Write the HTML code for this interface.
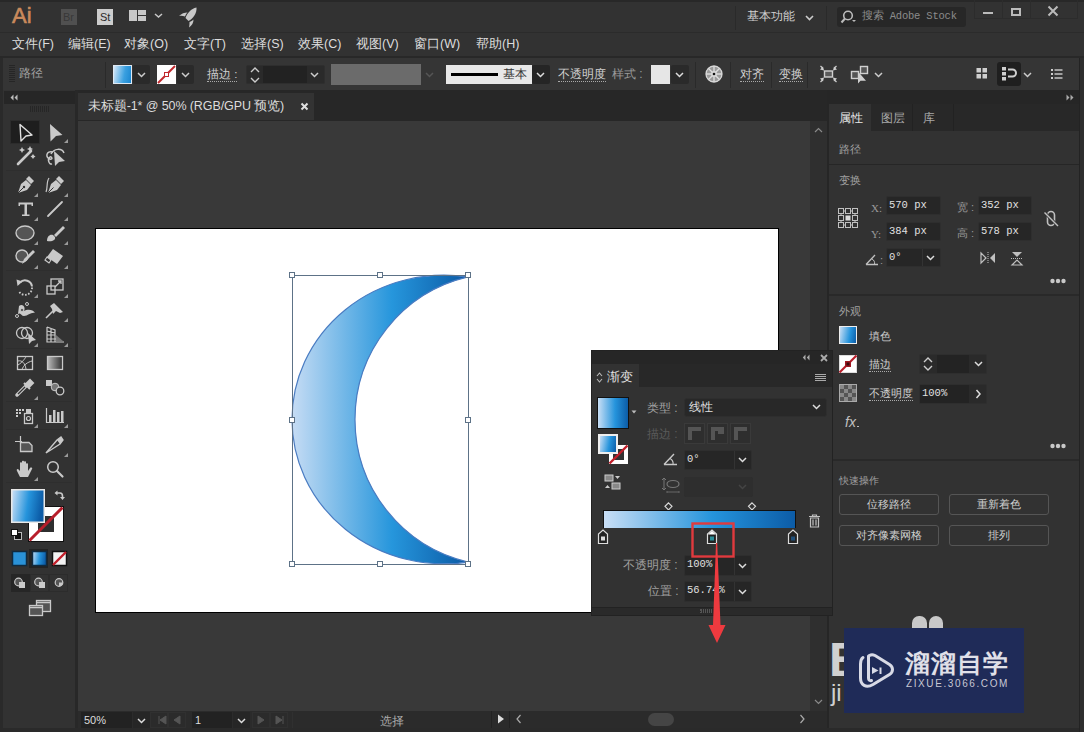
<!DOCTYPE html>
<html><head><meta charset="utf-8">
<style>
*{margin:0;padding:0;box-sizing:border-box}
html,body{width:1084px;height:732px;overflow:hidden;background:#323232;font-family:"Liberation Sans",sans-serif;color:#ccc}
.a{position:absolute}
.t{position:absolute;white-space:nowrap;font-size:12px;line-height:14px}
.m{font-family:"Liberation Mono",monospace}
svg{position:absolute;overflow:visible}
.sep{position:absolute;width:1px;background:#2a2a2a;border-right:1px solid #3a3a3a}
.inp{position:absolute;background:#262626;border:1px solid #2e2e2e;border-radius:2px}
.dd{position:absolute;background:#2a2a2a;border-radius:2px}
.ul{border-bottom:1px dotted #aaa}
</style></head><body>
<!-- ============ base blocks ============ -->
<div class="a" style="left:0;top:0;width:1084px;height:32px;background:#323232;border-top:2px solid #282828"></div>
<div class="a" style="left:0;top:32px;width:1084px;height:1px;background:#2b2b2b"></div>
<div class="a" style="left:0;top:56px;width:1084px;height:2px;background:#282828"></div>
<div class="a" style="left:0;top:58px;width:1084px;height:32px;background:#353535"></div>
<!-- left toolbar -->
<div class="a" style="left:0;top:90px;width:78px;height:642px;background:#323232"></div>
<div class="a" style="left:4px;top:91px;width:71px;height:13px;background:#262626"></div>
<div class="a" style="left:75px;top:90px;width:3px;height:642px;background:#282828"></div>
<div class="a" style="left:0;top:58px;width:3px;height:674px;background:#2a2a2a"></div>
<!-- doc tab bar -->
<div class="a" style="left:78px;top:90px;width:750px;height:31px;background:#272727"></div>
<div class="a" style="left:78px;top:93px;width:236px;height:27px;background:#333333"></div>
<!-- canvas -->
<div class="a" style="left:78px;top:121px;width:732px;height:590px;background:#393939"></div>
<div class="a" style="left:810px;top:121px;width:17px;height:590px;background:#2f2f2f"></div>
<div class="a" style="left:827px;top:90px;width:2px;height:642px;background:#262626"></div>
<!-- status bar -->
<div class="a" style="left:78px;top:711px;width:749px;height:17px;background:#2b2b2b"></div>
<div class="a" style="left:0;top:728px;width:1084px;height:4px;background:#2a2a2a"></div>
<!-- right panel -->
<div class="a" style="left:829px;top:90px;width:255px;height:14px;background:#262626"></div>
<div class="a" style="left:829px;top:104px;width:250px;height:624px;background:#323232"></div>
<div class="a" style="left:1079px;top:58px;width:5px;height:674px;background:#2e2e2e;border-left:1px solid #232323"></div>

<!-- artboard -->
<div class="a" style="left:95px;top:228px;width:684px;height:385px;background:#fff;border:1px solid #000"></div>


<!-- ============ moon ============ -->
<svg style="left:0;top:0" width="1084" height="732">
<defs><linearGradient id="mg" gradientUnits="userSpaceOnUse" x1="292" y1="0" x2="468" y2="0">
<stop offset="0" stop-color="#c6dcf4"/><stop offset="0.5674" stop-color="#2696dc"/><stop offset="1" stop-color="#0b5aa5"/></linearGradient></defs>
<path d="M468 276.95 A152.01 144.36 0 1 0 468 562.05 A146.41 146.41 0 0 1 468 276.95 Z" fill="url(#mg)" stroke="#4a7cc2" stroke-width="1.2"/>
<rect x="292.5" y="275.5" width="176" height="289" fill="none" stroke="#5d7287" stroke-width="1"/>
<g fill="#fff" stroke="#5d7287" stroke-width="1">
<rect x="289.5" y="272.5" width="5" height="5"/><rect x="377.5" y="272.5" width="5" height="5"/><rect x="465.5" y="272.5" width="5" height="5"/>
<rect x="289.5" y="417.5" width="5" height="5"/><rect x="465.5" y="417.5" width="5" height="5"/>
<rect x="289.5" y="561.5" width="5" height="5"/><rect x="377.5" y="561.5" width="5" height="5"/><rect x="465.5" y="561.5" width="5" height="5"/>
</g></svg>

<!-- ============ title bar ============ -->
<div class="t" style="left:12px;top:4px;font-size:22px;line-height:24px;color:#cc8a58;font-weight:normal;-webkit-text-stroke:0.6px #c98a5c;color:#c98a5c">Ai</div>
<div class="a" style="left:61px;top:9px;width:16px;height:16px;background:#505050"></div>
<div class="t" style="left:63px;top:10px;font-size:11px;color:#383838">Br</div>
<div class="a" style="left:97px;top:9px;width:16px;height:16px;background:#cdcdcd"></div>
<div class="t" style="left:100px;top:10px;font-size:11px;color:#2a2a2a">St</div>
<svg style="left:128px;top:10px" width="40" height="14"><rect x="1" y="0" width="8" height="11" fill="#c8c8c8"/><rect x="10" y="0" width="8" height="5" fill="#c8c8c8"/><rect x="10" y="6" width="8" height="5" fill="#c8c8c8"/><path d="M27 4 L30.5 7 L34 4" stroke="#c8c8c8" stroke-width="1.5" fill="none"/></svg>
<svg style="left:176px;top:5px" width="24" height="24"><path d="M20.5 2.5 C21 8 17 14 12.5 16 L9.5 13 C11 8.5 15 3.5 20.5 2.5 Z" fill="#c8c8c8"/><path d="M9 11.5 C9.5 10 10.5 8.5 11.5 7.5 C8.5 7.5 5.5 8.5 3 11 C5 10.5 7 10.8 9 11.5 Z" fill="#c8c8c8"/><path d="M13.5 17 C15 16.5 16.5 15.5 17.5 14.5 C17.5 17.5 16 20.5 13 22.5 C13.5 20.5 13.5 18.8 13.5 17 Z" fill="#c8c8c8"/></svg>
<div class="a" style="left:735px;top:6px;width:1px;height:24px;background:#2a2a2a"></div>
<div class="t" style="left:747px;top:9px;font-size:12px;color:#d0d0d0">基本功能</div>
<svg style="left:805px;top:14px" width="10" height="8"><path d="M1 2 L4.5 5.5 L8 2" stroke="#ccc" stroke-width="1.6" fill="none"/></svg>
<div class="a" style="left:826px;top:6px;width:1px;height:24px;background:#2a2a2a"></div>
<div class="a" style="left:837px;top:7px;width:129px;height:20px;background:#272727;border-radius:3px"></div>
<svg style="left:840px;top:9px" width="18" height="16"><circle cx="8" cy="6.5" r="4.3" stroke="#bbb" stroke-width="1.6" fill="none"/><path d="M5 9.5 L1.5 13.5" stroke="#bbb" stroke-width="2"/><path d="M12 11 L16 11 L14 13 Z" fill="#bbb"/></svg>
<div class="t m" style="left:862px;top:9px;font-size:10.5px;color:#8c8c8c;letter-spacing:-0.2px">搜索 Adobe Stock</div>
<div class="a" style="left:974px;top:0;width:104px;height:19px;border:1px solid #2c2c2c;border-top:none"></div>
<div class="a" style="left:1002px;top:0;width:1px;height:19px;background:#2c2c2c"></div>
<div class="a" style="left:1030px;top:0;width:1px;height:19px;background:#2c2c2c"></div>
<div class="a" style="left:983px;top:12px;width:10px;height:2px;background:#bbb"></div>
<div class="a" style="left:1011px;top:8px;width:10px;height:8px;border:2px solid #bbb;border-top-width:2px"></div>
<svg style="left:1047px;top:5px" width="12" height="12"><path d="M1.5 1.5 L10.5 10.5 M10.5 1.5 L1.5 10.5" stroke="#bbb" stroke-width="2"/></svg>

<!-- ============ menu ============ -->
<div class="t" style="left:12px;top:37px;font-size:12.5px;color:#ddd">文件(F)</div>
<div class="t" style="left:68px;top:37px;font-size:12.5px;color:#ddd">编辑(E)</div>
<div class="t" style="left:124px;top:37px;font-size:12.5px;color:#ddd">对象(O)</div>
<div class="t" style="left:184px;top:37px;font-size:12.5px;color:#ddd">文字(T)</div>
<div class="t" style="left:241px;top:37px;font-size:12.5px;color:#ddd">选择(S)</div>
<div class="t" style="left:298px;top:37px;font-size:12.5px;color:#ddd">效果(C)</div>
<div class="t" style="left:356px;top:37px;font-size:12.5px;color:#ddd">视图(V)</div>
<div class="t" style="left:414px;top:37px;font-size:12.5px;color:#ddd">窗口(W)</div>
<div class="t" style="left:476px;top:37px;font-size:12.5px;color:#ddd">帮助(H)</div>

<!-- ============ control bar ============ -->
<div class="a" style="left:9px;top:65px;width:6px;height:18px;background:repeating-linear-gradient(180deg,#262626 0 1px,transparent 1px 2px)"></div>
<div class="t" style="left:19px;top:66px;font-size:12px;color:#a0a0a0">路径</div>
<div class="a" style="left:105px;top:62px;width:1px;height:26px;background:#2a2a2a"></div>
<div class="a" style="left:113px;top:65px;width:19px;height:19px;border:1px solid #dfe9f3;background:linear-gradient(100deg,#d4e7f8 0%,#3aa0e0 60%,#1a86d0 100%)"></div>
<div class="dd" style="left:133px;top:65px;width:17px;height:19px"></div>
<svg style="left:137px;top:72px" width="10" height="6"><path d="M1 1 L4.5 4.5 L8 1" stroke="#ccc" stroke-width="1.5" fill="none"/></svg>
<div class="a" style="left:157px;top:65px;width:19px;height:19px;background:#fff"></div>
<svg style="left:157px;top:65px" width="19" height="19"><path d="M1 18 L18 1" stroke="#c0282d" stroke-width="2"/><rect x="7" y="7" width="5" height="5" fill="#c0282d"/><rect x="8" y="8" width="3" height="3" fill="#fff"/></svg>
<div class="dd" style="left:177px;top:65px;width:17px;height:19px"></div>
<svg style="left:181px;top:72px" width="10" height="6"><path d="M1 1 L4.5 4.5 L8 1" stroke="#ccc" stroke-width="1.5" fill="none"/></svg>
<div class="t ul" style="left:207px;top:68px;font-size:11.5px;color:#d0d0d0;line-height:13px">描边 :</div>
<div class="inp" style="left:246px;top:65px;width:79px;height:19px;background:#2a2a2a"></div>
<svg style="left:249px;top:66px" width="12" height="18"><path d="M2 6 L6 2 L10 6 M2 12 L6 16 L10 12" stroke="#ccc" stroke-width="1.4" fill="none"/></svg>
<div class="a" style="left:263px;top:66px;width:44px;height:17px;background:#222"></div>
<svg style="left:310px;top:72px" width="10" height="6"><path d="M1 1 L4.5 4.5 L8 1" stroke="#ccc" stroke-width="1.5" fill="none"/></svg>
<div class="a" style="left:331px;top:64px;width:90px;height:21px;background:#6b6b6b"></div>
<svg style="left:425px;top:72px" width="10" height="6"><path d="M1 1 L4.5 4.5 L8 1" stroke="#555" stroke-width="1.5" fill="none"/></svg>
<div class="a" style="left:446px;top:65px;width:86px;height:19px;background:#e8e8e8"></div>
<div class="a" style="left:451px;top:73px;width:47px;height:3px;background:#000"></div>
<div class="t" style="left:503px;top:67px;font-size:12px;color:#333">基本</div>
<div class="dd" style="left:532px;top:65px;width:18px;height:19px;background:#252525"></div>
<svg style="left:536px;top:72px" width="10" height="6"><path d="M1 1 L4.5 4.5 L8 1" stroke="#ddd" stroke-width="1.5" fill="none"/></svg>
<div class="t ul" style="left:558px;top:68px;font-size:11.5px;color:#d0d0d0;line-height:13px">不透明度</div>
<div class="t" style="left:612px;top:67px;font-size:12px;color:#9a9a9a">样式 :</div>
<div class="a" style="left:651px;top:65px;width:19px;height:19px;background:#e6e6e6"></div>
<div class="dd" style="left:671px;top:65px;width:18px;height:19px"></div>
<svg style="left:675px;top:72px" width="10" height="6"><path d="M1 1 L4.5 4.5 L8 1" stroke="#ddd" stroke-width="1.5" fill="none"/></svg>
<div class="a" style="left:695px;top:62px;width:1px;height:26px;background:#2a2a2a"></div>
<svg style="left:705px;top:65px" width="18" height="18"><circle cx="9" cy="9" r="8" fill="#9a9a9a" stroke="#d8d8d8" stroke-width="1.3"/><g stroke="#dcdcdc" stroke-width="1.4"><path d="M9 1 V17 M1 9 H17 M3.3 3.3 L14.7 14.7 M14.7 3.3 L3.3 14.7"/></g><circle cx="9" cy="9" r="3" fill="#d8d8d8"/><circle cx="9" cy="9" r="1.3" fill="#111"/></svg>
<div class="a" style="left:730px;top:62px;width:1px;height:26px;background:#2a2a2a"></div>
<div class="t ul" style="left:740px;top:68px;font-size:11.5px;color:#d0d0d0;line-height:13px">对齐</div>
<div class="a" style="left:771px;top:62px;width:1px;height:26px;background:#2a2a2a"></div>
<div class="t ul" style="left:779px;top:68px;font-size:11.5px;color:#d0d0d0;line-height:13px">变换</div>
<div class="a" style="left:807px;top:62px;width:1px;height:26px;background:#2a2a2a"></div>
<svg style="left:819px;top:65px" width="19" height="17"><rect x="5.5" y="6" width="8" height="6" stroke="#d0d0d0" stroke-width="1.4" fill="#5a5a5a"/><g fill="#d0d0d0"><path d="M5 5.5 L1 4.5 L4 1.5 Z M14 5.5 L18 4.5 L15 1.5 Z M5 12.5 L1 13.5 L4 16.5 Z M14 12.5 L18 13.5 L15 16.5 Z"/></g><g stroke="#d0d0d0" stroke-width="1.2"><path d="M1.5 1 L3.5 3 M17.5 1 L15.5 3 M1.5 17 L3.5 15 M17.5 17 L15.5 15"/></g></svg>
<svg style="left:850px;top:65px" width="19" height="20"><rect x="1.5" y="6.5" width="7" height="7" stroke="#d0d0d0" stroke-width="1.4" fill="#555"/><rect x="10.5" y="1.5" width="7" height="7" stroke="#d0d0d0" stroke-width="1.4" fill="#555"/><path d="M8 6.5 L8 18.5 L10.5 15.8 L16 15.8 Z" fill="#d0d0d0"/></svg>
<svg style="left:874px;top:72px" width="10" height="6"><path d="M1 1 L4.5 4.5 L8 1" stroke="#ccc" stroke-width="1.5" fill="none"/></svg>
<svg style="left:974px;top:66px" width="16" height="15"><g fill="#cfcfcf"><rect x="2.5" y="2" width="4.5" height="4.5"/><rect x="8.5" y="2" width="4.5" height="4.5"/><rect x="2.5" y="8" width="4.5" height="4.5"/><rect x="8.5" y="8" width="4.5" height="4.5"/></g></svg>
<div class="a" style="left:997px;top:62px;width:24px;height:24px;background:#1f1f1f;border-radius:3px"></div>
<svg style="left:1001px;top:67px" width="17" height="14"><g fill="#cfcfcf"><rect x="1" y="0" width="4" height="3.5"/><rect x="1" y="5" width="4" height="3.5"/><rect x="1" y="10" width="4" height="3.5"/></g><path d="M7 2.5 H11.5 A3.5 3.5 0 0 1 11.5 9.5 H7" stroke="#cfcfcf" stroke-width="2" fill="none"/></svg>
<svg style="left:1023px;top:72px" width="10" height="6"><path d="M1 1 L4.5 4.5 L8 1" stroke="#ccc" stroke-width="1.5" fill="none"/></svg>
<svg style="left:1050px;top:68px" width="14" height="11"><g fill="#cfcfcf"><rect x="1" y="1" width="2" height="2"/><rect x="1" y="5" width="2" height="2"/><rect x="1" y="9" width="2" height="2"/><rect x="4.5" y="1.3" width="8" height="1.4"/><rect x="4.5" y="5.3" width="8" height="1.4"/><rect x="4.5" y="9.3" width="8" height="1.4"/></g></svg>



<!-- ============ scrollbars & status ============ -->
<svg style="left:814px;top:127px" width="9" height="6"><path d="M1 5 L4.5 1.5 L8 5" stroke="#8a8a8a" stroke-width="1.2" fill="none"/></svg>
<svg style="left:814px;top:699px" width="9" height="6"><path d="M1 1 L4.5 4.5 L8 1" stroke="#8a8a8a" stroke-width="1.2" fill="none"/></svg>
<div class="a" style="left:510px;top:711px;width:300px;height:17px;background:#2b2b2b"></div>
<div class="a" style="left:648px;top:713px;width:26px;height:13px;background:#454545;border-radius:7px"></div>
<svg style="left:515px;top:714px" width="8" height="10"><path d="M5.5 1 L2 5 L5.5 9" stroke="#aaa" stroke-width="1.2" fill="none"/></svg>
<svg style="left:798px;top:714px" width="8" height="10"><path d="M2.5 1 L6 5 L2.5 9" stroke="#aaa" stroke-width="1.2" fill="none"/></svg>
<div class="a" style="left:81px;top:712px;width:51px;height:16px;background:#222"></div>
<div class="t" style="left:84px;top:713px;font-size:11px;color:#ddd">50%</div>
<div class="a" style="left:133px;top:712px;width:17px;height:16px;background:#262626"></div>
<svg style="left:137px;top:718px" width="10" height="6"><path d="M1 1 L4.5 4.5 L8 1" stroke="#ddd" stroke-width="1.5" fill="none"/></svg>
<svg style="left:150px;top:712px" width="40" height="16"><rect x="0.5" y="0.5" width="17" height="15" fill="none" stroke="#303030"/><rect x="18.5" y="0.5" width="17" height="15" fill="none" stroke="#303030"/><path d="M9 4 V12 M16 4 L10 8 L16 12 Z M30 4 L24 8 L30 12 Z" fill="#555" stroke="#555"/></svg>
<div class="a" style="left:192px;top:712px;width:40px;height:16px;background:#222"></div>
<div class="t" style="left:195px;top:713px;font-size:11px;color:#ddd">1</div>
<div class="a" style="left:233px;top:712px;width:17px;height:16px;background:#262626"></div>
<svg style="left:237px;top:718px" width="10" height="6"><path d="M1 1 L4.5 4.5 L8 1" stroke="#ddd" stroke-width="1.5" fill="none"/></svg>
<svg style="left:252px;top:712px" width="40" height="16"><rect x="0.5" y="0.5" width="17" height="15" fill="none" stroke="#303030"/><rect x="18.5" y="0.5" width="17" height="15" fill="none" stroke="#303030"/><path d="M6 4 L12 8 L6 12 Z M24 4 L30 8 L24 12 Z M31 4 V12" fill="#555" stroke="#555"/></svg>
<div class="a" style="left:292px;top:712px;width:1px;height:16px;background:#303030"></div>
<div class="t" style="left:380px;top:714px;font-size:12px;color:#aaa">选择</div>
<div class="a" style="left:491px;top:711px;width:1px;height:17px;background:#222"></div>
<svg style="left:497px;top:714px" width="8" height="10"><path d="M1 0.5 L7 5 L1 9.5 Z" fill="#ddd"/></svg>
<div class="a" style="left:509px;top:711px;width:1px;height:17px;background:#222"></div>


<!-- ============ right panel ============ -->
<div class="a" style="left:829px;top:104px;width:250px;height:27px;background:#282828"></div>
<div class="a" style="left:829px;top:104px;width:42px;height:27px;background:#323232"></div>
<div class="a" style="left:912px;top:104px;width:1px;height:27px;background:#222"></div>
<div class="a" style="left:953px;top:104px;width:1px;height:27px;background:#222"></div>
<div class="t" style="left:839px;top:111px;font-size:12px;color:#e8e8e8">属性</div>
<div class="t" style="left:881px;top:111px;font-size:12px;color:#a8a8a8">图层</div>
<div class="t" style="left:923px;top:111px;font-size:12px;color:#a8a8a8">库</div>
<div class="t" style="left:839px;top:142px;font-size:11px;color:#a0a0a0">路径</div>
<div class="a" style="left:829px;top:164px;width:250px;height:1px;background:#262626"></div>
<div class="t" style="left:839px;top:173px;font-size:11px;color:#a0a0a0">变换</div>
<svg style="left:838px;top:208px" width="22" height="22"><g fill="none" stroke="#c0c0c0" stroke-width="1"><rect x="0.5" y="0.5" width="5" height="5"/><rect x="7.5" y="0.5" width="5" height="5"/><rect x="14.5" y="0.5" width="5" height="5"/><rect x="0.5" y="7.5" width="5" height="5"/><rect x="14.5" y="7.5" width="5" height="5"/><rect x="0.5" y="14.5" width="5" height="5"/><rect x="7.5" y="14.5" width="5" height="5"/><rect x="14.5" y="14.5" width="5" height="5"/><path d="M5.5 3 H7.5 M12.5 3 H14.5 M5.5 17 H7.5 M12.5 17 H14.5 M3 5.5 V7.5 M3 12.5 V14.5 M17 5.5 V7.5 M17 12.5 V14.5"/></g><rect x="7.5" y="7.5" width="5" height="5" fill="#ddd"/></svg>
<div class="t" style="left:871px;top:201px;font-size:11px;color:#999;font-family:'Liberation Serif',serif">X:</div>
<div class="t" style="left:871px;top:227px;font-size:11px;color:#999;font-family:'Liberation Serif',serif">Y:</div>
<div class="inp" style="left:886px;top:196px;width:55px;height:19px"></div>
<div class="inp" style="left:886px;top:222px;width:55px;height:19px"></div>
<div class="t m" style="left:889px;top:198px;font-size:10.5px;color:#e0e0e0">570 px</div>
<div class="t m" style="left:889px;top:224px;font-size:10.5px;color:#e0e0e0">384 px</div>
<div class="t" style="left:957px;top:200px;font-size:11px;color:#999">宽 :</div>
<div class="t" style="left:957px;top:226px;font-size:11px;color:#999">高 :</div>
<div class="inp" style="left:978px;top:196px;width:54px;height:19px"></div>
<div class="inp" style="left:978px;top:222px;width:54px;height:19px"></div>
<div class="t m" style="left:981px;top:198px;font-size:10.5px;color:#e0e0e0">352 px</div>
<div class="t m" style="left:981px;top:224px;font-size:10.5px;color:#e0e0e0">578 px</div>
<svg style="left:1043px;top:210px" width="18" height="18"><rect x="4.5" y="1.5" width="7" height="14" rx="3.5" fill="none" stroke="#c0c0c0" stroke-width="1.6"/><path d="M1 2 L15 16" stroke="#323232" stroke-width="3"/><path d="M1.5 2.5 L15 16" stroke="#c0c0c0" stroke-width="1.4"/></svg>
<svg style="left:865px;top:252px" width="16" height="14"><path d="M1 12.5 H13 M1 12.5 L10 3" stroke="#c0c0c0" stroke-width="1.3" fill="none"/><path d="M7 7 C9 8 10 10 9.5 12.5" stroke="#c0c0c0" stroke-width="1" fill="none"/></svg>
<div class="t" style="left:880px;top:253px;font-size:11px;color:#999">:</div>
<div class="inp" style="left:886px;top:248px;width:55px;height:19px"></div>
<div class="a" style="left:922px;top:249px;width:1px;height:17px;background:#333"></div>
<div class="t m" style="left:889px;top:250px;font-size:10.5px;color:#e0e0e0">0°</div>
<svg style="left:926px;top:255px" width="10" height="6"><path d="M1 1 L4.5 4.5 L8 1" stroke="#ddd" stroke-width="1.5" fill="none"/></svg>
<svg style="left:980px;top:251px" width="16" height="14"><path d="M1 2 L6 7 L1 12 Z" fill="none" stroke="#c0c0c0" stroke-width="1.2"/><path d="M15 2 L10 7 L15 12 Z" fill="#c0c0c0"/><path d="M8 1 V13" stroke="#c0c0c0" stroke-dasharray="1 1"/></svg>
<svg style="left:1010px;top:251px" width="14" height="15"><path d="M2 1 H12 L7 6 Z" fill="#c0c0c0"/><path d="M2 14 H12 L7 9 Z" fill="none" stroke="#c0c0c0" stroke-width="1.2"/><path d="M1 7.5 H13" stroke="#c0c0c0" stroke-dasharray="1 1"/></svg>
<svg style="left:1050px;top:278px" width="16" height="6"><circle cx="2.5" cy="3" r="2.2" fill="#c8c8c8"/><circle cx="8" cy="3" r="2.2" fill="#c8c8c8"/><circle cx="13.5" cy="3" r="2.2" fill="#c8c8c8"/></svg>
<div class="a" style="left:829px;top:294px;width:250px;height:2px;background:#292929"></div>
<div class="t" style="left:839px;top:304px;font-size:11px;color:#a0a0a0">外观</div>
<div class="a" style="left:839px;top:326px;width:18px;height:18px;background:#eee"></div>
<div class="a" style="left:840px;top:327px;width:16px;height:16px;background:linear-gradient(100deg,#c8def5 0%,#2594dc 60%,#0c5ca7 100%)"></div>
<div class="t" style="left:869px;top:329px;font-size:11px;color:#c8c8c8">填色</div>
<div class="a" style="left:839px;top:355px;width:18px;height:18px;background:#fff"></div>
<svg style="left:839px;top:355px" width="18" height="18"><rect x="0.5" y="0.5" width="17" height="17" fill="none" stroke="#ddd"/><path d="M0.5 17.5 L17.5 0.5" stroke="#b81e2b" stroke-width="2.2"/><rect x="6" y="6" width="6" height="6" fill="#a01822"/><rect x="7.5" y="7.5" width="3" height="3" fill="#3a0a0e"/></svg>
<div class="t ul" style="left:869px;top:358px;font-size:11px;color:#d0d0d0;line-height:13px">描边</div>
<div class="inp" style="left:919px;top:354px;width:68px;height:20px;background:#2a2a2a"></div>
<svg style="left:921px;top:355px" width="14" height="18"><path d="M3 7 L7 3 L11 7 M3 11 L7 15 L11 11" stroke="#ccc" stroke-width="1.4" fill="none"/></svg>
<div class="a" style="left:937px;top:355px;width:32px;height:18px;background:#232323"></div>
<svg style="left:974px;top:361px" width="10" height="6"><path d="M1 1 L4.5 4.5 L8 1" stroke="#ddd" stroke-width="1.5" fill="none"/></svg>
<svg style="left:839px;top:384px" width="18" height="18"><rect x="0.5" y="0.5" width="17" height="17" fill="#555" stroke="#aaa"/><g fill="#888"><rect x="1" y="1" width="4" height="4"/><rect x="9" y="1" width="4" height="4"/><rect x="5" y="5" width="4" height="4"/><rect x="13" y="5" width="4" height="4"/><rect x="1" y="9" width="4" height="4"/><rect x="9" y="9" width="4" height="4"/><rect x="5" y="13" width="4" height="4"/><rect x="13" y="13" width="4" height="4"/></g></svg>
<div class="t ul" style="left:869px;top:387px;font-size:11px;color:#d0d0d0;line-height:13px">不透明度</div>
<div class="inp" style="left:919px;top:384px;width:68px;height:20px;background:#2a2a2a"></div>
<div class="a" style="left:920px;top:385px;width:49px;height:18px;background:#232323"></div>
<div class="t m" style="left:922px;top:386px;font-size:10.5px;color:#e0e0e0">100%</div>
<svg style="left:975px;top:389px" width="7" height="10"><path d="M1.5 1 L5 5 L1.5 9" stroke="#ddd" stroke-width="1.5" fill="none"/></svg>
<div class="t" style="left:845px;top:415px;font-size:14px;color:#c0c0c0;font-style:italic;font-family:'Liberation Sans',sans-serif">fx</div>
<div class="a" style="left:857px;top:426px;width:2px;height:1px;background:#bbb"></div>
<svg style="left:1050px;top:443px" width="16" height="6"><circle cx="2.5" cy="3" r="2.2" fill="#c8c8c8"/><circle cx="8" cy="3" r="2.2" fill="#c8c8c8"/><circle cx="13.5" cy="3" r="2.2" fill="#c8c8c8"/></svg>
<div class="a" style="left:829px;top:459px;width:250px;height:2px;background:#292929"></div>
<div class="t" style="left:839px;top:474px;font-size:10.2px;color:#a0a0a0">快速操作</div>
<div class="a" style="left:839px;top:494px;width:100px;height:21px;border:1px solid #555;border-radius:3px;text-align:center;font-size:11px;line-height:19px;color:#d0d0d0">位移路径</div>
<div class="a" style="left:949px;top:494px;width:100px;height:21px;border:1px solid #555;border-radius:3px;text-align:center;font-size:11px;line-height:19px;color:#d0d0d0">重新着色</div>
<div class="a" style="left:839px;top:525px;width:100px;height:21px;border:1px solid #555;border-radius:3px;text-align:center;font-size:11px;line-height:19px;color:#d0d0d0">对齐像素网格</div>
<div class="a" style="left:949px;top:525px;width:100px;height:21px;border:1px solid #555;border-radius:3px;text-align:center;font-size:11px;line-height:19px;color:#d0d0d0">排列</div>

<!-- ============ left toolbar ============ -->
<svg style="left:0;top:0" width="80" height="732">
<path d="M30 106 H50 V112 H30 Z" fill="url(#grip)"/><defs><pattern id="grip" width="2" height="6" patternUnits="userSpaceOnUse" x="30" y="106"><rect width="1" height="6" fill="#262626"/></pattern></defs>
<rect x="10.5" y="120.5" width="29" height="23" fill="#1e1e1e" stroke="#2c2c2c"/>
<g fill="#2e2e2e"><rect x="6" y="170" width="66" height="1"/><rect x="6" y="270" width="66" height="1"/><rect x="6" y="348" width="66" height="1"/><rect x="6" y="401" width="66" height="1"/><rect x="6" y="429" width="66" height="1"/><rect x="6" y="482" width="66" height="1"/></g>
<g fill="#c9c9c9" stroke="none">
<!-- corner triangles -->
<path d="M68 139 V143 H64 Z M38 193 V197 H34 Z M68 193 V197 H64 Z M38 217 V221 H34 Z M68 217 V221 H64 Z M38 241 V245 H34 Z M68 241 V245 H64 Z M38 265 V269 H34 Z M68 265 V269 H64 Z M38 294 V298 H34 Z M68 294 V298 H64 Z M38 318 V322 H34 Z M68 318 V322 H64 Z M38 343 V347 H34 Z M68 343 V347 H64 Z M38 396 V400 H34 Z M38 424 V428 H34 Z M68 424 V428 H64 Z M68 453 V457 H64 Z M38 477 V481 H34 Z" fill="#9a9a9a"/>
</g>
<!-- selection -->
<path d="M20 124.5 L32 135 L26 136 L21 141 Z" fill="none" stroke="#e0e0e0" stroke-width="1.4" stroke-linejoin="round"/>
<path d="M50 124 L62.5 135 L56 136 L50.5 141.5 Z" fill="#c9c9c9"/>
<!-- magic wand -->
<path d="M18 164 L31 151" stroke="#c9c9c9" stroke-width="2.6" stroke-linecap="round"/>
<path d="M22 147 l1 2 2 1 -2 1 -1 2 -1 -2 -2 -1 2 -1 Z M30 146 l1 2 2 1 -2 1 -1 2 -1 -2 -2 -1 2 -1 Z M33 154 l1 1.5 1.5 1 -1.5 1 -1 1.5 -1 -1.5 -1.5 -1 1.5 -1 Z" fill="#c9c9c9"/>
<!-- lasso -->
<path d="M53 152 C46 150 45 158 50 159 C53 160 52 156 50 157 C47 159 49 165 52 164" stroke="#c9c9c9" stroke-width="1.5" fill="none"/>
<path d="M51 154 C54 148 62 148 64 153" stroke="#c9c9c9" stroke-width="1.5" fill="none"/>
<path d="M54 151 L65 161 L59 162 L55 166 Z" fill="#c9c9c9"/>
<!-- pen -->
<path d="M18 193 L21 184 L26 180 L31 185 L27 190 Z" fill="#c9c9c9"/><path d="M26 179 L29 176 L34 181 L31 184 Z" fill="#c9c9c9"/><path d="M18 193 L23.5 187.5" stroke="#323232" stroke-width="1"/><circle cx="24" cy="187" r="1.2" fill="#323232"/>
<!-- curvature pen -->
<path d="M48 193 L51 184 L56 180 L61 185 L57 190 Z" fill="#c9c9c9"/><path d="M56 179 L59 176 L64 181 L61 184 Z" fill="#c9c9c9"/><path d="M48 193 L53.5 187.5" stroke="#323232" stroke-width="1"/>
<path d="M49 178 C46 182 48 188 46 192" stroke="#c9c9c9" stroke-width="1.2" fill="none"/>
<!-- type -->
<path d="M18.5 202.5 H33 V206 H31.5 V204.5 H27 V214.5 H29.5 V216 H22 V214.5 H24.5 V204.5 H20 V206 H18.5 Z" fill="#c9c9c9"/>
<!-- line -->
<path d="M48 216 L62 202" stroke="#c9c9c9" stroke-width="1.8" stroke-linecap="round"/>
<!-- ellipse -->
<ellipse cx="25" cy="233" rx="9" ry="7" fill="#555" stroke="#c9c9c9" stroke-width="1.4"/>
<!-- brush -->
<path d="M47 241 C47 236 50 234 53 235 L55 237 C56 240 52 242 47 241 Z" fill="#c9c9c9"/><path d="M54 235 L63 226 L65 228 L56 237 Z" fill="#c9c9c9"/>
<!-- shaper/blob -->
<circle cx="22" cy="256" r="6" fill="#555" stroke="#c9c9c9" stroke-width="1.4"/>
<path d="M22 264 L24 259 L33 250 L35 252 L26 261 Z" fill="#c9c9c9"/>
<!-- eraser -->
<path d="M53 249 L63 256 L57 264 L47 257 Z" fill="#c9c9c9"/><path d="M47 257 L51 260 L49 263 L45 260 Z" fill="#323232" stroke="#c9c9c9" stroke-width="1.2"/>
<!-- rotate -->
<path d="M20 282.5 A7 7 0 0 1 32 286.5" stroke="#c9c9c9" stroke-width="2" fill="none"/><path d="M32 287.5 A7 7 0 0 1 19 291.5" stroke="#c9c9c9" stroke-width="1.8" fill="none" stroke-dasharray="1.6 1.6"/><path d="M16.5 279.5 L22.5 281.5 L17.5 286 Z" fill="#c9c9c9"/>
<!-- scale -->
<rect x="47" y="286" width="8" height="8" stroke="#c9c9c9" stroke-width="1.3" fill="none"/><rect x="51" y="279" width="12" height="11" stroke="#c9c9c9" stroke-width="1.3" fill="none"/><path d="M55 287 L61 281 M58 281 H61 V284" stroke="#c9c9c9" stroke-width="1.3" fill="none"/>
<!-- puppet warp -->
<path d="M19 306 C23 303 26 308 24 311 C27 309 33 309 35 313 C31 312 28 316 24 316 C21 316 21 312 18 314 Z" fill="#c9c9c9"/><circle cx="17" cy="316" r="1.5" fill="#323232" stroke="#c9c9c9"/><circle cx="27" cy="304" r="1.5" fill="#323232" stroke="#c9c9c9"/><circle cx="22" cy="310" r="1.5" fill="#323232" stroke="#c9c9c9"/>
<!-- pin -->
<path d="M54 303 L63 312 L60 313 L56 311 L53 314 L52 309 L50 306 Z" fill="#c9c9c9"/><path d="M46 318 L53 311" stroke="#c9c9c9" stroke-width="1.6"/>
<!-- shape builder -->
<circle cx="22" cy="333" r="5.5" stroke="#c9c9c9" stroke-width="1.3" fill="none"/><circle cx="27" cy="333" r="5.5" stroke="#c9c9c9" stroke-width="1.3" fill="none"/><path d="M28 333 L36 340 L32 341 L29 344 Z" fill="#c9c9c9"/>
<!-- perspective grid -->
<path d="M47 327 L55 330 V342 H64 M47 327 V342 H64 M47 331 L55 333 M47 335 H55 M47 339 H58 M51 328 V342" stroke="#c9c9c9" stroke-width="1.2" fill="none"/><path d="M56 335 L63 341 H56 Z" fill="#777"/>
<!-- mesh -->
<rect x="17.5" y="356.5" width="15" height="13" stroke="#c9c9c9" stroke-width="1.3" fill="none"/><path d="M18 365 C23 362 25 358 26 357 M22 370 C23 365 28 362 32 361 M18 361 C22 360 25 363 26 369" stroke="#c9c9c9" stroke-width="1" fill="none"/>
<!-- gradient tool -->
<defs><linearGradient id="gt" x1="0" x2="1"><stop offset="0" stop-color="#bdbdbd"/><stop offset="1" stop-color="#2e2e2e"/></linearGradient></defs>
<rect x="47.5" y="356.5" width="15" height="13" fill="url(#gt)" stroke="#c9c9c9" stroke-width="1.3"/>
<!-- eyedropper -->
<path d="M17 395 L26 386" stroke="#c9c9c9" stroke-width="3.5" stroke-linecap="round"/><path d="M18 394 L25 387" stroke="#323232" stroke-width="1.3"/><path d="M26 384 L30 380 L33 383 L29 387 Z M24 383 L30 389" stroke="#c9c9c9" stroke-width="2" fill="#c9c9c9"/>
<!-- blend -->
<rect x="46" y="380" width="6" height="6" fill="#c9c9c9"/><circle cx="55" cy="387" r="3.8" fill="#777" stroke="#c9c9c9" stroke-width="1"/><circle cx="60" cy="391" r="3.8" fill="#323232" stroke="#c9c9c9" stroke-width="1.3"/>
<!-- symbol sprayer -->
<g fill="#c9c9c9"><rect x="16" y="409" width="2" height="2"/><rect x="19" y="409" width="2" height="2"/><rect x="22" y="409" width="2" height="2"/><rect x="16" y="412" width="2" height="2"/><rect x="19" y="412" width="2" height="2"/><rect x="16" y="415" width="2" height="2"/></g>
<rect x="24.5" y="413.5" width="8" height="10" stroke="#c9c9c9" stroke-width="1.3" fill="none"/><rect x="26" y="409" width="5" height="4" fill="#c9c9c9"/><circle cx="28.5" cy="418.5" r="2" stroke="#c9c9c9" stroke-width="1.2" fill="none"/>
<!-- column graph -->
<path d="M46.5 408 V422.5 H64" stroke="#c9c9c9" stroke-width="1.2" fill="none"/><g fill="#c9c9c9"><rect x="49" y="415" width="2.5" height="7"/><rect x="53" y="410" width="2.5" height="12"/><rect x="57" y="412" width="2.5" height="10"/><rect x="61" y="411" width="2.5" height="11"/></g>
<!-- artboard -->
<path d="M15 441.5 H22 M20.5 436 V443" stroke="#c9c9c9" stroke-width="1.2"/><path d="M20.5 442.5 H29 L32 445.5 V451.5 H20.5 Z" fill="#555" stroke="#c9c9c9" stroke-width="1.3"/>
<!-- slice/knife -->
<path d="M46 453 L57 440 L61 437 L63 440 L60 444 Z" fill="none" stroke="#c9c9c9" stroke-width="1.4"/><path d="M57 440 L61 437 L63 440 L60 444 Z" fill="#c9c9c9"/>
<!-- hand -->
<path d="M20 477 L17 471 C16 469 18 468 19 470 L20 471 V463 C20 462 22 462 22 463 V469 V461.5 C22 460.5 24 460.5 24 461.5 V469 V462 C24 461 26 461 26 462 V469 V464 C26 463 28 463 28 464 V471 L30 468 C31 467 33 468 32 469 L28 477 Z" fill="#c9c9c9"/>
<!-- zoom -->
<circle cx="53" cy="467" r="5.3" stroke="#c9c9c9" stroke-width="1.5" fill="none"/><path d="M57 471 L62.5 476.5" stroke="#c9c9c9" stroke-width="2.2" stroke-linecap="round"/>
<!-- fill / stroke -->
<path d="M56.5 493 H60 C62 493 62.5 494 62.5 496 V497" stroke="#c9c9c9" stroke-width="1.6" fill="none"/><path d="M54.5 493 L57.5 490.5 V495.5 Z M60 497 H65 L62.5 500 Z" fill="#c9c9c9"/>
<rect x="28" y="506" width="36" height="36" fill="#111"/><rect x="29" y="507" width="34" height="34" fill="#fff"/><rect x="38" y="516" width="16" height="16" fill="#2e2e2e"/>
<path d="M29.5 540.5 L62.5 507.5" stroke="#b81e2b" stroke-width="3"/>
<defs><linearGradient id="tg" x1="0" x2="1" y1="0" y2="0.15"><stop offset="0" stop-color="#c8def5"/><stop offset="0.55" stop-color="#2594dc"/><stop offset="1" stop-color="#0c5ca7"/></linearGradient></defs>
<rect x="11" y="489" width="34" height="34" fill="#e8e8e8"/><rect x="12.5" y="490.5" width="31" height="31" fill="url(#tg)"/>
<rect x="14.5" y="532.5" width="7" height="7" fill="#111" stroke="#bbb" stroke-width="1"/><rect x="11.5" y="529.5" width="6" height="6" fill="#fff" stroke="#111" stroke-width="1"/>
<!-- color mode buttons -->
<rect x="29" y="549" width="19" height="19" fill="#232323"/>
<rect x="12.5" y="551.5" width="14" height="14" fill="#2a92d8" stroke="#0f2a40" stroke-width="1.5"/>
<rect x="32.5" y="551.5" width="14" height="14" fill="url(#tg)" stroke="#0f2a40" stroke-width="1.5"/>
<rect x="52.5" y="551.5" width="14" height="14" fill="#f2f2f2" stroke="#111" stroke-width="1.5"/><path d="M53 565 L66 552" stroke="#c21f2a" stroke-width="2.4"/>
<!-- drawing modes -->
<rect x="11" y="574" width="19" height="18" fill="#262626"/>
<rect x="30.5" y="574.5" width="18" height="17" fill="none" stroke="#2c2c2c"/><rect x="49.5" y="574.5" width="18" height="17" fill="none" stroke="#2c2c2c"/>
<circle cx="18.5" cy="582" r="3.8" fill="#555" stroke="#c9c9c9" stroke-width="1.2"/><rect x="19" y="582" width="6" height="6" fill="#c9c9c9"/>
<circle cx="38.5" cy="582" r="3.8" fill="#555" stroke="#c9c9c9" stroke-width="1.2"/><rect x="39" y="582" width="6" height="6" fill="#c9c9c9"/>
<circle cx="59" cy="582.5" r="3.8" fill="#555" stroke="#c9c9c9" stroke-width="1.2"/><path d="M59 582.5 H62.8 A3.8 3.8 0 0 1 59 586.3 Z" fill="#c9c9c9"/>
<!-- screen mode -->
<rect x="36.5" y="600.5" width="14" height="11" fill="#555" stroke="#c9c9c9" stroke-width="1.3"/><rect x="29.5" y="605.5" width="13" height="10" fill="#555" stroke="#c9c9c9" stroke-width="1.3"/>
<path d="M37 602.5 H50 M30 607.5 H42" stroke="#c9c9c9" stroke-width="1.3"/>
</svg>

<!-- ============ doc tab ============ -->
<div class="t" style="left:88px;top:99px;font-size:12.5px;color:#dcdcdc;letter-spacing:-0.1px">未标题-1* @ 50% (RGB/GPU 预览)</div>
<svg style="left:300px;top:102px" width="9" height="9"><path d="M1.5 1.5 L7.5 7.5 M7.5 1.5 L1.5 7.5" stroke="#e0e0e0" stroke-width="2"/></svg>
<svg style="left:10px;top:94px" width="8" height="7"><path d="M3.5 0.5 L0.5 3.5 L3.5 6.5 Z M7.5 0.5 L4.5 3.5 L7.5 6.5 Z" fill="#bbb"/></svg>
<svg style="left:1066px;top:94px" width="8" height="7"><path d="M0.5 0.5 L3.5 3.5 L0.5 6.5 Z M4.5 0.5 L7.5 3.5 L4.5 6.5 Z" fill="#aaa"/></svg>


<!-- ============ gradient panel ============ -->
<div class="a" style="left:591px;top:350px;width:242px;height:266px;background:#323232;border:1px solid #222"></div>
<div class="a" style="left:592px;top:351px;width:240px;height:13px;background:#262626"></div>
<div class="a" style="left:592px;top:364px;width:240px;height:23px;background:#282828"></div>
<div class="a" style="left:592px;top:364px;width:47px;height:23px;background:#323232"></div>
<svg style="left:802px;top:354px" width="9" height="7"><path d="M3.5 0.5 L0.8 3.5 L3.5 6.5 Z M7.5 0.5 L4.8 3.5 L7.5 6.5 Z" fill="#aaa"/></svg>
<svg style="left:820px;top:354px" width="8" height="8"><path d="M1 1 L7 7 M7 1 L1 7" stroke="#aaa" stroke-width="1.8"/></svg>
<svg style="left:596px;top:372px" width="7" height="11"><path d="M1 4 L3.5 1 L6 4 M1 7 L3.5 10 L6 7" stroke="#bbb" stroke-width="1.1" fill="none"/></svg>
<div class="t" style="left:607px;top:370px;font-size:12.5px;color:#e0e0e0">渐变</div>
<svg style="left:815px;top:374px" width="12" height="8"><path d="M0 0.5 H11 M0 2.5 H11 M0 4.5 H11 M0 6.5 H11" stroke="#aaa" stroke-width="1"/></svg>
<div class="a" style="left:597px;top:397px;width:32px;height:32px;background:#111"></div>
<div class="a" style="left:598px;top:398px;width:30px;height:30px;background:linear-gradient(90deg,#c8def5 0%,#2594dc 57%,#0c5ca7 100%)"></div>
<svg style="left:631px;top:410px" width="6" height="4"><path d="M0.5 0.5 H5.5 L3 3.5 Z" fill="#bbb"/></svg>
<div class="a" style="left:609px;top:445px;width:19px;height:19px;background:#fff"></div>
<svg style="left:609px;top:445px" width="19" height="19"><rect x="4" y="4" width="11" height="11" fill="#323232"/><path d="M0.5 18.5 L18.5 0.5" stroke="#c21f2a" stroke-width="2.4"/></svg>
<div class="a" style="left:598px;top:434px;width:20px;height:20px;background:#eee"></div>
<div class="a" style="left:600px;top:436px;width:16px;height:16px;background:linear-gradient(100deg,#c8def5 0%,#2594dc 57%,#0c5ca7 100%)"></div>
<svg style="left:604px;top:474px" width="18" height="16"><rect x="1" y="1" width="8" height="6" fill="#888" stroke="#ccc"/><path d="M11 2 H16 L13.5 5 Z" fill="#ccc"/><rect x="8" y="9" width="8" height="6" fill="#888" stroke="#ccc"/><path d="M1 14 H6 L3.5 11 Z" fill="#ccc"/></svg>
<div class="t" style="left:647px;top:401px;font-size:12px;color:#a0a0a0">类型 :</div>
<div class="a" style="left:684px;top:398px;width:143px;height:19px;background:#282828;border:1px solid #2e2e2e;border-radius:3px"></div>
<div class="t" style="left:689px;top:400px;font-size:12px;color:#e0e0e0">线性</div>
<svg style="left:812px;top:404px" width="10" height="6"><path d="M1 1 L4.5 4.5 L8 1" stroke="#ddd" stroke-width="1.5" fill="none"/></svg>
<div class="t" style="left:647px;top:427px;font-size:12px;color:#5a5a5a">描边 :</div>
<svg style="left:684px;top:423px" width="68" height="22"><g fill="#2e2e2e" stroke="#3a3a3a"><rect x="0.5" y="0.5" width="20" height="20"/><rect x="23.5" y="0.5" width="20" height="20"/><rect x="46.5" y="0.5" width="20" height="20"/></g><g fill="#555"><path d="M4 4 H17 V8 H8 V17 H4 Z"/><path d="M27 4 H40 V11 H34 V8 H31 V17 H27 Z"/><path d="M50 4 H63 V8 H54 V17 H50 Z"/></g></svg>
<svg style="left:663px;top:452px" width="17" height="14"><path d="M1 12.5 H14 M1 12.5 L11 2" stroke="#c8c8c8" stroke-width="1.4" fill="none"/><path d="M7 6.5 C9.5 8 10.5 10 10 12.5" stroke="#c8c8c8" stroke-width="1.1" fill="none"/></svg>
<div class="inp" style="left:684px;top:450px;width:68px;height:20px;background:#262626"></div>
<div class="a" style="left:734px;top:451px;width:1px;height:18px;background:#333"></div>
<div class="t m" style="left:687px;top:452px;font-size:10.5px;color:#e0e0e0">0°</div>
<svg style="left:738px;top:457px" width="10" height="6"><path d="M1 1 L4.5 4.5 L8 1" stroke="#ddd" stroke-width="1.5" fill="none"/></svg>
<svg style="left:661px;top:477px" width="20" height="20"><path d="M3 1 V13 M1 3 L3 1 L5 3 M1 11 L3 13 L5 11" stroke="#777" stroke-width="1" fill="none"/><ellipse cx="12" cy="7" rx="6" ry="3.5" fill="none" stroke="#777" stroke-width="1.2"/><path d="M6 15 H18 M6 14 V16 M18 14 V16" stroke="#666" stroke-width="1"/></svg>
<div class="a" style="left:684px;top:477px;width:69px;height:20px;background:#2e2e2e;border-radius:2px"></div>
<svg style="left:738px;top:484px" width="10" height="6"><path d="M1 1 L4.5 4.5 L8 1" stroke="#444" stroke-width="1.5" fill="none"/></svg>
<svg style="left:664px;top:502px" width="92" height="9"><path d="M4.5 0.8 L8 4.3 L4.5 7.8 L1 4.3 Z M88 0.8 L91.5 4.3 L88 7.8 L84.5 4.3 Z" fill="none" stroke="#d8d8d8" stroke-width="1.2"/></svg>
<div class="a" style="left:603px;top:510px;width:193px;height:18px;background:#111"></div>
<div class="a" style="left:604px;top:511px;width:191px;height:17px;background:linear-gradient(90deg,#c8def5 0%,#2594dc 56.74%,#0c5ca7 100%)"></div>
<svg style="left:808px;top:514px" width="13" height="14"><path d="M1 2.5 H12 M4.5 2.5 V1 H8.5 V2.5" stroke="#c0c0c0" stroke-width="1.2" fill="none"/><path d="M2.5 4 H10.5 V13 H2.5 Z M5 5.5 V11.5 M8 5.5 V11.5" stroke="#c0c0c0" stroke-width="1.2" fill="none"/></svg>
<svg style="left:597px;top:529px" width="210" height="16"><g stroke="#ddd" stroke-width="1.2"><path d="M1.5 14.5 V5 L6 1 L10.5 5 V14.5 Z" fill="#222"/><path d="M110.5 14.5 V5 L115 1 L119.5 5 V14.5 Z" fill="#222"/><path d="M191.5 14.5 V5 L196 1 L200.5 5 V14.5 Z" fill="#222"/></g><path d="M111 5.5 L115 1.7 L119 5.5 Z" fill="#fff"/><rect x="4" y="7.5" width="4" height="4" fill="#ddd"/><rect x="113" y="7.5" width="4" height="4" fill="#2a8f9a"/><rect x="194" y="7.5" width="4" height="4" fill="#1f4f7a"/></svg>
<div class="t" style="left:623px;top:558px;font-size:12px;color:#a0a0a0">不透明度 :</div>
<div class="inp" style="left:684px;top:555px;width:68px;height:21px;background:#262626"></div>
<div class="a" style="left:734px;top:556px;width:1px;height:19px;background:#333"></div>
<div class="t m" style="left:687px;top:557px;font-size:10.5px;color:#e0e0e0">100%</div>
<svg style="left:738px;top:563px" width="10" height="6"><path d="M1 1 L4.5 4.5 L8 1" stroke="#ddd" stroke-width="1.5" fill="none"/></svg>
<div class="t" style="left:648px;top:584px;font-size:12px;color:#a0a0a0">位置 :</div>
<div class="inp" style="left:684px;top:581px;width:68px;height:21px;background:#262626"></div>
<div class="a" style="left:734px;top:582px;width:1px;height:19px;background:#333"></div>
<div class="t m" style="left:687px;top:583px;font-size:10.5px;color:#e0e0e0">56.74%</div>
<svg style="left:738px;top:589px" width="10" height="6"><path d="M1 1 L4.5 4.5 L8 1" stroke="#ddd" stroke-width="1.5" fill="none"/></svg>
<div class="a" style="left:592px;top:607px;width:240px;height:8px;background:#2a2a2a;border-top:1px solid #222"></div>
<div class="a" style="left:700px;top:609px;width:12px;height:4px;border-left:1px dotted #555;border-right:1px dotted #555;background:repeating-linear-gradient(90deg,#555 0 1px,transparent 1px 2px)"></div>

<!-- ============ annotation ============ -->
<svg style="left:0;top:0" width="1084" height="732">
<rect x="692.5" y="523.5" width="41" height="33" fill="none" stroke="#e03a3e" stroke-width="2.4"/>
<path d="M716 543 L717.2 543 L720.5 625 L725.5 625 L717 643 L708.5 625 L713 625 Z" fill="#ee3a3f"/>
</svg>

<!-- ============ watermark ============ -->
<div class="a" style="left:912px;top:616px;width:15px;height:14px;background:#c8c8c8;border-radius:7px 7px 0 0"></div>
<div class="a" style="left:929px;top:616px;width:14px;height:14px;background:#c8c8c8;border-radius:7px 7px 0 0"></div>
<div class="t" style="left:829px;top:636px;font-size:48px;line-height:48px;color:#d0d0d0;font-weight:bold">E</div>
<div class="t" style="left:831px;top:681px;font-size:24px;line-height:24px;color:#d0d0d0">ji</div>
<div class="a" style="left:844px;top:628px;width:180px;height:85px;background:#1f2b58"></div>
<svg style="left:850px;top:645px" width="50" height="50"><path d="M19.5 10.5 C21 9.5 23 9.5 25 10.5 L39.5 19.5 C43.5 22 43.5 27 39.5 29.5 L23 39.5 C16 43.5 10.5 40 10.5 33 V19 C10.5 16 11.5 13.5 13 12.5" fill="none" stroke="#d8dae6" stroke-width="3" stroke-linecap="round" stroke-linejoin="round"/><path d="M18.5 11 V33 C18.5 35 19.5 36 21.5 35.5" fill="none" stroke="#d8dae6" stroke-width="3" stroke-linecap="round"/><path d="M22 22 L28.5 25.5 L22 29 Z" fill="#d8dae6"/><rect x="29.5" y="22.5" width="2" height="6.5" fill="#d8dae6"/></svg>
<div class="t" style="left:905px;top:650px;font-size:25px;line-height:26px;color:#e0e0e8;font-weight:bold;letter-spacing:1px">溜溜自学</div>
<div class="t" style="left:906px;top:679px;font-size:10px;line-height:10px;color:#c8c8d4;letter-spacing:1.6px">ZIXUE.3066.COM</div>

</body></html>
